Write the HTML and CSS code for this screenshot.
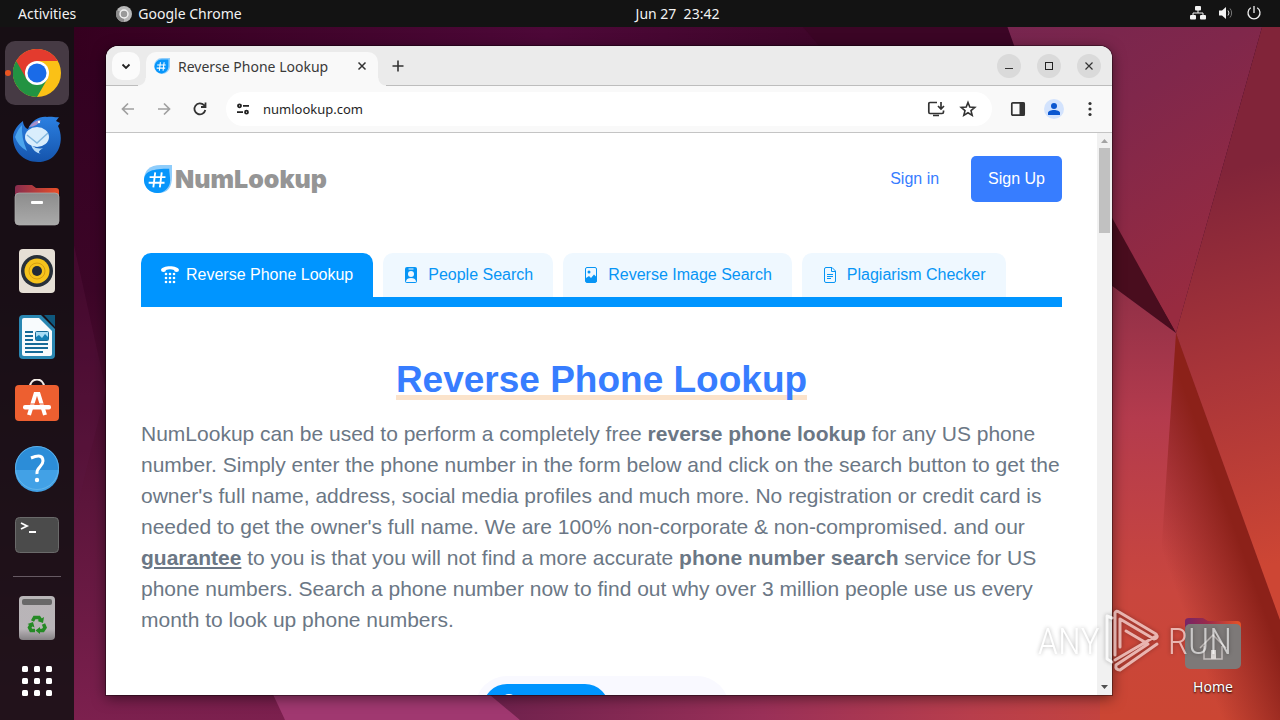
FILE: index.html
```html
<!DOCTYPE html>
<html lang="en">
<head>
	<meta charset="UTF-8">
	<title>Reverse Phone Lookup</title>
	<link rel="stylesheet" href="styles.css">
</head>
<body>
	<svg class="wallpaper" viewBox="0 0 1280 720" preserveAspectRatio="none" aria-hidden="true">
		<defs>
			<linearGradient id="bgBase" x1="0" y1="0" x2="0" y2="1"><stop offset="0" stop-color="#30001f"/><stop offset=".4" stop-color="#3c0527"/><stop offset=".7" stop-color="#5c153b"/><stop offset="1" stop-color="#7c204e"/></linearGradient>
			<linearGradient id="bgTop" x1="0" y1="0" x2="1" y2="0"><stop offset="0" stop-color="#35001f"/><stop offset=".5" stop-color="#4d0838"/><stop offset="1" stop-color="#350420"/></linearGradient>
			<linearGradient id="bgLow" x1="0" y1="0" x2="1" y2="0"><stop offset="0" stop-color="#6e214d"/><stop offset=".4" stop-color="#9a3058"/><stop offset=".7" stop-color="#b83e4c"/><stop offset="1" stop-color="#c94638"/></linearGradient>
			<linearGradient id="bgUp" x1="0" y1="0" x2=".5" y2="1"><stop offset="0" stop-color="#76254f"/><stop offset=".4" stop-color="#80274b"/><stop offset="1" stop-color="#982b40"/></linearGradient>
			<linearGradient id="bgRight" gradientUnits="userSpaceOnUse" x1="1190" y1="180" x2="1290" y2="560"><stop offset="0" stop-color="#812439"/><stop offset=".5" stop-color="#a93539"/><stop offset="1" stop-color="#cd4634"/></linearGradient>
			<linearGradient id="bgMid" gradientUnits="userSpaceOnUse" x1="1110" y1="290" x2="1110" y2="720"><stop offset="0" stop-color="#913047"/><stop offset=".3" stop-color="#b43b4d"/><stop offset=".7" stop-color="#c9463e"/><stop offset="1" stop-color="#cb4633"/></linearGradient>
			<linearGradient id="bgBand" gradientUnits="userSpaceOnUse" x1="1190" y1="630" x2="1262" y2="604"><stop offset="0" stop-color="#8c241f" stop-opacity="0"/><stop offset="1" stop-color="#8c2119"/></linearGradient>
		</defs>
		<rect width="1280" height="720" fill="url(#bgBase)"/>
		<path d="M74 20H1020V60H74Z" fill="url(#bgTop)"/>
		<path d="M797 20H1010L1030 70H840Z" fill="#3b0525"/>
		<path d="M74 245L106 390L74 520Z" fill="#5c1742" opacity=".3"/>
		<path d="M210 560L285 720H520L480 670Z" fill="#a03870"/>
		<path d="M484 690H1180V720H520Z" fill="url(#bgLow)"/>
		<path d="M1005 20H1264L1176 333L1100 200L1030 90Z" fill="url(#bgUp)"/>
		<path d="M1264 20H1280V640L1176 333Z" fill="url(#bgRight)"/>
		<path d="M1100 196L1176 333L1100 277Z" fill="#490d1e"/>
		<path d="M1100 277L1176 333L1280 620V720H1100Z" fill="url(#bgMid)"/>
		<path d="M1176 333L1280 620V720H1150Z" fill="url(#bgBand)"/>
	</svg>

	<header class="topbar">
		<nav class="topbar-left">
			<button>Activities</button>
			<button class="app-menu">
				<svg width="16" height="16" viewBox="0 0 16 16"><circle cx="8" cy="8" r="8" fill="#b8b8b8"/><path d="M8 8L1 4A8 8 0 0 0 8 16Z" fill="#8b8b8b"/><circle cx="8" cy="8" r="4" fill="#999" stroke="#f2f2f2" stroke-width="1.5"/></svg>
				Google Chrome
			</button>
		</nav>
		<button class="clock">Jun 27&nbsp; 23:42</button>
		<button class="tray" aria-label="System">
			<svg width="16" height="16" viewBox="0 0 16 16" fill="#f2f2f2"><rect x="5" y="1" width="6" height="4.500" rx="1"/><rect x="0" y="10" width="6" height="4.500" rx="1"/><rect x="10" y="10" width="6" height="4.500" rx="1"/><path d="M8 5v3M3 11V8h10v3" fill="none" stroke="#f2f2f2"/></svg>
			<svg width="16" height="16" viewBox="0 0 16 16" fill="#f2f2f2"><path d="M1 5.500h3L8 2v12L4 10.500H1Z"/><path d="M10 5.500a4 4 0 0 1 0 5" fill="none" stroke="#ddd"/><path d="M12 3.500a7 7 0 0 1 0 9" fill="none" stroke="#777"/></svg>
			<svg width="16" height="16" viewBox="0 0 16 16" fill="none" stroke="#f2f2f2" stroke-width="1.300"><path d="M8 1v7M4.800 2.800a6 6 0 1 0 6.400 0"/></svg>
		</button>
	</header>

	<div class="desktop">
		<nav class="dock">
			<button class="active" aria-label="Chrome">
				<svg width="48" height="48" viewBox="0 0 48 48"><circle cx="24" cy="24" r="24" fill="#fbc116"/><path d="M24 24L3.200 12A24 24 0 0 0 24 48L34.400 30Z" fill="#229342"/><path d="M24 12H44.800A24 24 0 0 0 3.200 12L13.600 30Z" fill="#e33b2e"/><circle cx="24" cy="24" r="12" fill="#fff"/><circle cx="24" cy="24" r="9.500" fill="#1a6be8"/></svg>
			</button>
			<button aria-label="Thunderbird">
				<svg width="48" height="48" viewBox="0 0 48 48"><defs><linearGradient id="bird" x1="0" y1="0" x2="0" y2="1"><stop offset="0" stop-color="#2b80e2"/><stop offset="1" stop-color="#1554ac"/></linearGradient></defs><path d="M0 22C0 15 6 9 10 6C10 10 13 14 15 14C19 5 27 1 34 2C39 1 43 3 46 2L43 6L47 8L45 11C52 25 46 47 25 47C10 47 0 36 0 22Z" fill="url(#bird)"/><path d="M2 22Q5 14 9 10Q8 22 14 36Q5 31 2 22Z" fill="#4ca5ed"/><path d="M16 12Q21 5 28 5Q24 12 16 12Z" fill="#a58fc9"/><circle cx="26" cy="7" r="1.200" fill="#fff"/><ellipse cx="24" cy="22" rx="12" ry="10" fill="#d9edfc"/><path d="M14 20L24 28L35 18" fill="none" stroke="#84b8df" stroke-width="1.500"/><path d="M18 30Q24 35 30 33Q23 37 28 39Q20 37 18 30" fill="#b9dcf8"/></svg>
			</button>
			<button aria-label="Files">
				<svg width="48" height="48" viewBox="0 0 48 48"><defs><linearGradient id="folder"><stop offset="0" stop-color="#872c4e"/><stop offset="1" stop-color="#e94f28"/></linearGradient><linearGradient id="gray" x1="0" y1="0" x2="0" y2="1"><stop offset="0" stop-color="#8c8c8c"/><stop offset="1" stop-color="#aaa"/></linearGradient></defs><path d="M2 7Q2 4 5 4H19L23 7H43Q46 7 46 10V20H2Z" fill="url(#folder)"/><rect x="2" y="12" width="44" height="32" rx="4" fill="url(#gray)" stroke="#b0b0b0" stroke-width=".700"/><rect x="18" y="20" width="12" height="3" rx="1" fill="#fff"/></svg>
			</button>
			<button aria-label="Rhythmbox">
				<svg width="48" height="48" viewBox="0 0 48 48"><rect x="6" y="2" width="36" height="44" rx="4" fill="#e6dfd5"/><circle cx="24" cy="24" r="16" fill="#28303a"/><circle cx="24" cy="24" r="12.500" fill="#f6c31c"/><circle cx="24" cy="24" r="8" fill="none" stroke="#d69e10"/><circle cx="24" cy="24" r="5" fill="#222b38"/></svg>
			</button>
			<button aria-label="Writer">
				<svg width="48" height="48" viewBox="0 0 48 48"><path d="M6 6Q6 2 10 2H28L42 16V42Q42 46 38 46H10Q6 46 6 42Z" fill="#2a87b2"/><path d="M31 2H42V14Z" fill="#0f587d"/><path d="M9 7Q9 5 11 5H26L39 18V41Q39 43 37 43H11Q9 43 9 41Z" fill="#f8fbfd"/><path d="M12 19h8M12 23h8M12 27h8M12 31h23M12 35h23M12 39h18" stroke="#176b98" stroke-width="2"/><rect x="22.500" y="18.500" width="13" height="9" rx="1" fill="#a8dcf5" stroke="#176b98"/><path d="M23 27V24L26 22L29 25L32 21L35 24V27Z" fill="#1680b5"/></svg>
			</button>
			<button aria-label="Software">
				<svg width="48" height="48" viewBox="0 0 48 48"><path d="M17 8C17 -2 31 -2 31 8" fill="none" stroke="#f6eee8" stroke-width="2"/><rect x="2" y="6" width="44" height="36" rx="4" fill="#ed5f30"/><path d="M16 36L22.500 15H25.500L32 36" fill="none" stroke="#fff" stroke-width="4"/><path d="M16 25H32" stroke="#ed5f30" stroke-width="1"/><rect x="10" y="26" width="28" height="4.500" rx="2" fill="#fff"/></svg>
			</button>
			<button aria-label="Help">
				<svg width="48" height="48" viewBox="0 0 48 48"><circle cx="24" cy="23" r="22" fill="#2c8dd8"/><path d="M2 25A22 22 0 0 0 46 25Z" fill="#42a1e6"/><circle cx="24" cy="23" r="21.500" fill="none" stroke="#6ab9ec" stroke-width=".800"/><path d="M18 13Q30 8 30 16C30 22 23 22 24 29" fill="none" stroke="#fff" stroke-width="3"/><circle cx="24" cy="35" r="2.200" fill="#fff"/></svg>
			</button>
			<button aria-label="Terminal">
				<svg width="48" height="48" viewBox="0 0 48 48"><rect x="2.500" y="6.500" width="43" height="35" rx="4" fill="#4b4b4b" stroke="#6a6a6a"/><path d="M8 12L14 15L8 18M16 21H23" fill="none" stroke="#fff" stroke-width="1.800"/></svg>
			</button>
			<hr>
			<button aria-label="Trash">
				<svg width="48" height="48" viewBox="0 0 48 48"><defs><linearGradient id="trash" x1="0" y1="0" x2="0" y2="1"><stop offset="0" stop-color="#b8b5b7"/><stop offset=".75" stop-color="#b9b4b8"/><stop offset="1" stop-color="#858184"/></linearGradient></defs><rect x="6" y="2" width="36" height="44" rx="4" fill="url(#trash)"/><rect x="9" y="5" width="30" height="6" rx="2" fill="#686868"/><g fill="none" stroke="#258a25" stroke-width="3.500"><path d="M19.500 27L21.500 23.500H26L28 26.500"/><path d="M30.500 30L32 33.500L30 36.500H26"/><path d="M22 36.500H18L16.500 33.500L18 31"/></g><path d="M31 23L30 29L24.500 27ZM27 33V40L22.500 36.500ZM14.500 30L20 28L21.500 33.500Z" fill="#258a25"/></svg>
			</button>
			<button class="apps" aria-label="Show applications">
				<svg width="48" height="48" viewBox="0 0 48 48" fill="#fff"><g id="dots"><rect x="9" y="9" width="6" height="6" rx="1.500"/><rect x="21" y="9" width="6" height="6" rx="1.500"/><rect x="33" y="9" width="6" height="6" rx="1.500"/></g><use href="#dots" y="12"/><use href="#dots" y="24"/></svg>
			</button>
		</nav>

		<main class="workspace">
			<a href="#" class="shortcut">
				<svg width="56" height="56" viewBox="0 0 56 56"><defs><linearGradient id="home"><stop offset="0" stop-color="#762567"/><stop offset=".4" stop-color="#9b2a4a"/><stop offset="1" stop-color="#e75426"/></linearGradient></defs><path d="M0 6Q0 3 4 3H18L23 6H52Q56 6 56 10V20H0Z" fill="url(#home)"/><rect y="9" width="56" height="45" rx="5" fill="#7d7978"/><path d="M15 33L28 20L41 33M19 31V44H37V31" fill="none" stroke="#c5bfbd" stroke-width="1.500"/><rect x="26" y="35" width="5" height="9" fill="#ddd8d6"/></svg>
				<span>Home</span>
			</a>

			<section class="window">
				<div class="tabstrip">
					<button class="tab-search" aria-label="Search tabs"><svg width="16" height="16" viewBox="0 0 16 16"><path d="M4.500 6.500L8 10L11.500 6.500" fill="none" stroke="#222" stroke-width="1.800"/></svg></button>
					<div class="tab">
						<svg width="16" height="16" viewBox="0 0 30 30"><path d="M30 0V14A15 15 0 1 1 15 0Z" fill="#8fcdfb"/><path d="M27 3V16A13 13 0 1 1 13 3Z" fill="#0796fb"/><path d="M12 8L10 24M19 8L17 24M6 13H22M5 19H21" stroke="#fff" stroke-width="2"/></svg>
						<span>Reverse Phone Lookup</span>
						<button aria-label="Close tab"><svg width="16" height="16" viewBox="0 0 16 16"><path d="M4.500 4.500l7 7M11.500 4.500l-7 7" stroke="#333" stroke-width="1.500"/></svg></button>
					</div>
					<button class="new-tab" aria-label="New tab"><svg width="16" height="16" viewBox="0 0 16 16"><path d="M8 2.500v11M2.500 8h11" stroke="#333" stroke-width="1.600"/></svg></button>
					<div class="win-buttons">
						<button aria-label="Minimize"><svg width="16" height="16" viewBox="0 0 16 16"><path d="M4 10.500h8" stroke="#333"/></svg></button>
						<button aria-label="Maximize"><svg width="16" height="16" viewBox="0 0 16 16"><rect x="4.500" y="4.500" width="7" height="7" fill="none" stroke="#222"/></svg></button>
						<button aria-label="Close"><svg width="16" height="16" viewBox="0 0 16 16"><path d="M4.500 4.500l7 7M11.500 4.500l-7 7" stroke="#333" stroke-width="1.200"/></svg></button>
					</div>
				</div>

				<div class="toolbar">
					<button aria-label="Back"><svg width="16" height="16" viewBox="0 0 16 16" fill="none" stroke="#a0a0a0" stroke-width="1.700"><path d="M14 8H3M8 2.500L2.500 8L8 13.500"/></svg></button>
					<button aria-label="Forward"><svg width="16" height="16" viewBox="0 0 16 16" fill="none" stroke="#a0a0a0" stroke-width="1.700"><path d="M2 8H13M8 2.500L13.500 8L8 13.500"/></svg></button>
					<button aria-label="Reload"><svg width="16" height="16" viewBox="0 0 16 16" fill="none" stroke="#333" stroke-width="1.800"><path d="M13.300 9A5.500 5.500 0 1 1 12 4.200L13.500 5.700M13.500 1.500V6H9"/></svg></button>
					<div class="omnibox">
						<button aria-label="Site information"><svg width="16" height="16" viewBox="0 0 16 16" fill="none" stroke="#222" stroke-width="1.800"><circle cx="4.500" cy="4.800" r="1.500"/><path d="M8 4.800h6M2 11.200h6"/><circle cx="11.500" cy="11.200" r="1.500"/></svg></button>
						<input type="text" value="numlookup.com" aria-label="Address">
						<button aria-label="Install"><svg width="18" height="18" viewBox="0 0 18 18" fill="none" stroke="#333" stroke-width="1.700"><path d="M10 2.500H3Q1.800 2.500 1.800 4V12Q1.800 13.500 3 13.500H15Q16.500 13.500 16.500 12V10.500M14 2V9M11 6L14 9L17 6M6 15.500H12"/></svg></button>
						<button aria-label="Bookmark"><svg width="18" height="18" viewBox="0 0 18 18"><path d="M9 2.500L10.800 7L15.800 7.400L12 10.600L13.200 15.400L9 12.800L4.800 15.400L6 10.600L2.200 7.400L7.200 7Z" fill="none" stroke="#333" stroke-width="1.600"/></svg></button>
					</div>
					<button aria-label="Side panel"><svg width="16" height="16" viewBox="0 0 16 16"><rect x="1.800" y="1.800" width="12.400" height="12.400" rx="1" fill="none" stroke="#333" stroke-width="1.700"/><path d="M9.500 1.500H14.500V14.500H9.500Z" fill="#333"/></svg></button>
					<button aria-label="Profile"><svg width="20" height="20" viewBox="0 0 20 20"><circle cx="10" cy="10" r="10" fill="#d3e3fd"/><circle cx="10" cy="7" r="3" fill="#0b57d0"/><path d="M4 16V14C4 10 16 10 16 14V16Z" fill="#0b57d0"/></svg></button>
					<button aria-label="Menu"><svg width="16" height="16" viewBox="0 0 16 16" fill="#333"><circle cx="8" cy="2.500" r="1.600"/><circle cx="8" cy="8" r="1.600"/><circle cx="8" cy="13.500" r="1.600"/></svg></button>
				</div>

				<div class="viewport">
					<div class="page">
						<header class="site-header">
							<a href="#" class="logo">
								<svg width="28" height="28" viewBox="0 0 30 30"><path d="M30 0V12C30 24 26 30 15 30C6 30 0 24 0 16C0 6 6 0 18 0Z" fill="#8fcdfb"/><path d="M27 4C27 8 28 12 28 16A13.500 13.500 0 0 1 14 30A14 14 0 0 1 0 17C0 6 10 4 27 4Z" fill="#0796fb"/><path d="M12 8L10 24M19 8L17 24M6 13H23M5 19H22" stroke="#fff" stroke-width="2"/></svg>
								NumLookup
							</a>
							<nav class="account">
								<a href="#">Sign in</a>
								<a href="#" class="signup">Sign Up</a>
							</nav>
						</header>

						<nav class="tools">
							<a href="#" class="act"><svg width="18" height="18" viewBox="0 0 18 18" fill="#fff"><path d="M0 4C1 -1 17 -1 18 4Q18 6 15.500 6Q13 6 13 4Q9 2.500 5 4Q5 6 2.500 6Q0 6 0 4Z"/><g id="keys"><circle cx="5" cy="8" r="1.300"/><circle cx="9" cy="8" r="1.300"/><circle cx="13" cy="8" r="1.300"/></g><use href="#keys" y="4"/><use href="#keys" y="8"/></svg>Reverse Phone Lookup</a>
							<a href="#"><svg width="18" height="18" viewBox="0 0 18 18"><rect x="2" y="1" width="12" height="16" rx="2" fill="#0795f5"/><circle cx="8" cy="8" r="3" fill="#eff8ff"/><path d="M5.500 3h5" stroke="#eff8ff"/><path d="M3 16Q3 12 8 12T13 16Z" fill="#eff8ff"/></svg>People Search</a>
							<a href="#"><svg width="18" height="18" viewBox="0 0 18 18"><rect x="2.500" y="1.500" width="11" height="15" rx="1.500" fill="#eff8ff" stroke="#0795f5"/><circle cx="6" cy="6" r="1.500" fill="#0795f5"/><path d="M3 12L6 10L8 12L11 8.500L13.500 11V16H3Z" fill="#0795f5"/></svg>Reverse Image Search</a>
							<a href="#"><svg width="18" height="18" viewBox="0 0 18 18" fill="none" stroke="#0795f5"><path d="M4 1.500H10L13.500 5V15Q13.500 16.500 12 16.500H4Q2.500 16.500 2.500 15V3Q2.500 1.500 4 1.500ZM9.500 1.500V5.500H13.500M5 8.500h6M5 10.500h6M5 12.500h4"/></svg>Plagiarism Checker</a>
						</nav>

						<h1><span>Reverse Phone Lookup</span></h1>
						<p class="intro">NumLookup can be used to perform a completely free <strong>reverse phone lookup</strong> for any US phone number. Simply enter the phone number in the form below and click on the search button to get the owner's full name, address, social media profiles and much more. No registration or credit card is needed to get the owner's full name. We are 100% non-corporate &amp; non-compromised. and our <a href="#">guarantee</a> to you is that you will not find a more accurate <strong>phone number search</strong> service for US phone numbers. Search a phone number now to find out why over 3 million people use us every month to look up phone numbers.</p>

						<div class="switch">
							<button aria-label="Phone"><svg width="16" height="16" viewBox="0 0 16 16"><circle cx="8" cy="8" r="7" fill="none" stroke="#fff" stroke-width="2"/></svg></button>
						</div>
					</div>
					<div class="scrollbar">
						<svg width="15" height="15" viewBox="0 0 15 15"><path d="M4 10L7.500 6L11 10Z" fill="#a3a3a3"/></svg>
						<div class="thumb"></div>
						<svg width="15" height="15" viewBox="0 0 15 15"><path d="M4 5L7.500 9L11 5Z" fill="#505050"/></svg>
					</div>
				</div>
			</section>
		</main>
	</div>

	<div class="watermark">
		<span>ANY</span>
		<svg width="60" height="64" viewBox="0 0 60 64" fill="none" stroke="#fff" stroke-width="3" stroke-linecap="round" stroke-linejoin="round"><path d="M3 7V50L8 53M3 7L8 9M11 46V4Q12 1 15 3L52 25Q55 29 50 30L16 10V38M52 27L11 51M53 35L16 61Q11 61 12 56L44 35L22 22"/></svg>
		<span>RUN</span>
	</div>
</body>
</html>
```
FILE: styles.css
```css
*{
	box-sizing: border-box;
}
body{
	margin: 0;
	height: 100vh;
	display: flex;
	flex-direction: column;
	overflow: hidden;
	position: relative;
	font-family: "Noto Sans", sans-serif;
	font-size: 14px;
	background: #30001f;
}
button{
	border: 0;
	padding: 0;
	background: none;
	color: inherit;
	font: inherit;
	display: flex;
	align-items: center;
	justify-content: center;
}
a{
	text-decoration: none;
}
svg{
	display: block;
	flex: none;
}
.wallpaper{
	position: absolute;
	top: 0;
	left: 0;
	width: 100%;
	height: 100%;
}
/*top panel*/
.topbar{
	position: relative;
	height: 27px;
	flex: none;
	display: grid;
	grid-template-columns: 1fr auto 1fr;
	align-items: center;
	background: #131313;
	color: #f2f2f2;
}
.topbar-left{
	display: flex;
	gap: 40px;
	padding-left: 18px;
}
.app-menu{
	gap: 6px;
}
.clock{
	margin-left: 75px;
}
.tray{
	justify-self: end;
	gap: 12px;
	padding: 0 18px 2px 0;
}
.desktop{
	position: relative;
	flex: 1;
	min-height: 0;
	display: flex;
}
/*dock*/
.dock{
	width: 74px;
	flex: none;
	display: flex;
	flex-direction: column;
	align-items: center;
	gap: 2px;
	padding-top: 14px;
	background: rgba(19,16,19,.85);
}
.dock button{
	position: relative;
	width: 64px;
	height: 64px;
	flex: none;
	border-radius: 10px;
}
.dock .active{
	background: #463a44;
}
.dock .active::before{
	content: "";
	position: absolute;
	left: 0;
	width: 6px;
	height: 6px;
	border-radius: 50%;
	background: #e95420;
}
.dock hr{
	width: 48px;
	height: 1px;
	flex: none;
	border: 0;
	margin: 7px 0;
	background: #665a63;
}
.dock .apps{
	height: 58px;
}
.workspace{
	position: relative;
	flex: 1;
}
.shortcut{
	position: absolute;
	right: 32px;
	bottom: 23px;
	width: 70px;
	display: flex;
	flex-direction: column;
	align-items: center;
	gap: 6px;
	color: #fff;
	line-height: 20px;
	text-shadow: 0 1px 2px #000;
}
/*browser window*/
.window{
	position: absolute;
	top: 19px;
	right: 168px;
	bottom: 25px;
	left: 32px;
	display: flex;
	flex-direction: column;
	overflow: hidden;
	border-radius: 12px 12px 0 0;
	background: #fff;
	box-shadow: 0 0 0 1px rgba(0,0,0,.35), 0 3px 14px rgba(0,0,0,.5);
}
.tabstrip{
	height: 40px;
	flex: none;
	display: flex;
	padding: 6px 11px 0 6px;
	background: #ebebeb;
	box-shadow: inset 0 -1px #bdbdbd;
}
.tab-search{
	width: 28px;
	height: 28px;
	border-radius: 10px;
	background: #fbfbfb;
}
.tab{
	position: relative;
	width: 232px;
	margin-left: 6px;
	padding: 0 8px 6px;
	display: flex;
	align-items: center;
	gap: 8px;
	border-radius: 10px 10px 0 0;
	background: #f9f9f9;
	color: #3a3a3a;
}
.tab::before,
.tab::after{
	content: "";
	position: absolute;
	bottom: 0;
	width: 8px;
	height: 8px;
}
.tab::before{
	left: -8px;
	background: radial-gradient(circle at 0 0, #ebebeb 7px, #f9f9f9 8px);
}
.tab::after{
	right: -8px;
	background: radial-gradient(circle at 100% 0, #ebebeb 7px, #f9f9f9 8px);
}
.tab span{
	flex: 1;
	white-space: nowrap;
}
.new-tab{
	width: 28px;
	height: 28px;
	margin-left: 6px;
}
.win-buttons{
	display: flex;
	gap: 16px;
	margin-left: auto;
	padding-top: 2px;
}
.win-buttons button{
	width: 24px;
	height: 24px;
	border-radius: 50%;
	background: #dadada;
}
.toolbar{
	height: 47px;
	flex: none;
	display: flex;
	align-items: center;
	padding: 0 4px;
	background: #f9f9f9;
	border-bottom: 1px solid #c4c4c4;
}
.toolbar > button{
	width: 36px;
	height: 34px;
}
.omnibox{
	flex: 1;
	min-width: 0;
	height: 34px;
	margin: 0 8px;
	padding: 0 8px 0 1px;
	display: flex;
	align-items: center;
	border-radius: 17px;
	background: #fff;
}
.omnibox button{
	width: 32px;
	height: 32px;
	flex: none;
}
.omnibox input{
	flex: 1;
	min-width: 0;
	border: 0;
	padding: 0 4px;
	background: none;
	outline: 0;
	font: inherit;
	font-size: 13px;
	color: #1f1f1f;
}
.viewport{
	flex: 1;
	min-height: 0;
	display: flex;
}
.scrollbar{
	width: 15px;
	flex: none;
	display: flex;
	flex-direction: column;
	background: #f1f1f1;
}
.thumb{
	height: 85px;
	margin: 0 2px auto;
	background: #c1c1c1;
}
/*site*/
.page{
	flex: 1;
	min-width: 0;
	overflow: hidden;
	padding: 23px 35px 0;
	font-family: "Liberation Sans", Arial, sans-serif;
	font-size: 16px;
}
.site-header{
	display: flex;
	align-items: center;
	justify-content: space-between;
	margin-bottom: 51px;
}
.logo{
	display: flex;
	align-items: center;
	gap: 3px;
	padding-left: 3px;
	font-family: Inter, sans-serif;
	font-size: 25px;
	line-height: 28px;
	font-weight: 900;
	color: #959595;
}
.account{
	display: flex;
	align-items: center;
	gap: 32px;
}
.account a{
	color: #377dff;
}
.account .signup{
	padding: 0 17px;
	line-height: 46px;
	border-radius: 5px;
	background: #377dff;
	color: #fff;
}
.tools{
	display: flex;
	gap: 10px;
	border-bottom: 10px solid #0095ff;
}
.tools a{
	display: flex;
	align-items: center;
	gap: 7px;
	height: 44px;
	padding: 0 20px;
	border-radius: 10px 10px 0 0;
	background: #eff8ff;
	color: #0795f5;
	white-space: nowrap;
}
.tools .act{
	background: #0095ff;
	color: #fff;
}
h1{
	margin: 52px 0 17px;
	text-align: center;
	font-size: 37px;
	line-height: 42px;
	color: #377dff;
}
h1 span{
	display: inline-block;
	background: linear-gradient(#fbe3cb,#fbe3cb) 0 36px / 100% 5px no-repeat;
}
.intro{
	margin: 0 0 41px;
	font-size: 21px;
	line-height: 31px;
	color: #6b7785;
}
.intro a{
	color: inherit;
	font-weight: bold;
	text-decoration: underline;
}
.switch{
	width: 254px;
	height: 64px;
	margin: 0 auto;
	padding: 8px;
	border-radius: 32px;
	background: #f9f9ff;
}
.switch button{
	width: 126px;
	height: 48px;
	align-items: flex-start;
	justify-content: flex-start;
	padding: 10px 18px;
	border-radius: 24px;
	background: #0095ff;
}
.watermark{
	position: absolute;
	right: 48px;
	bottom: 47px;
	display: flex;
	align-items: center;
	gap: 4px;
	opacity: .6;
	color: #fff;
	font-family: "Roboto Condensed", "Liberation Sans Narrow", Roboto, sans-serif;
	font-size: 37px;
	font-weight: 300;
	filter: drop-shadow(0 0 2px rgba(0,0,0,.5));
}
```
